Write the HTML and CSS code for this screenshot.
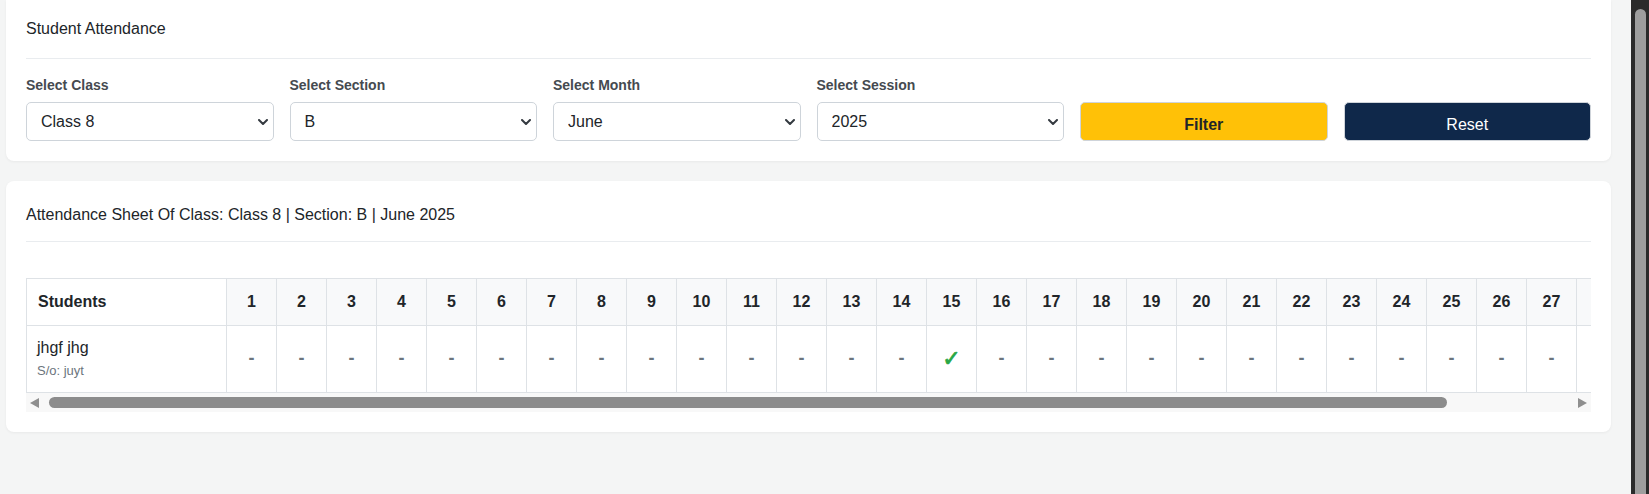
FILE: index.html
```html
<!DOCTYPE html>
<html lang="en">
<head>
<meta charset="utf-8">
<title>Student Attendance</title>
<link rel="stylesheet" href="styles.css">
</head>
<body>
<div class="page">
  <main class="main">
    <section class="card card-filter">
      <h1 class="card-title">Student Attendance</h1>
      <hr class="divider">
      <form class="filters">
        <div class="field">
          <label class="label">Select Class</label>
          <div class="select-wrap">
            <select class="select"><option>Class 8</option></select>
            <svg class="chev" viewBox="0 0 10 6" width="10" height="6"><path d="M1 1l4 4 4-4" fill="none" stroke="#343a40" stroke-width="2" stroke-linecap="round" stroke-linejoin="round"/></svg>
          </div>
        </div>
        <div class="field">
          <label class="label">Select Section</label>
          <div class="select-wrap">
            <select class="select"><option>B</option></select>
            <svg class="chev" viewBox="0 0 10 6" width="10" height="6"><path d="M1 1l4 4 4-4" fill="none" stroke="#343a40" stroke-width="2" stroke-linecap="round" stroke-linejoin="round"/></svg>
          </div>
        </div>
        <div class="field">
          <label class="label">Select Month</label>
          <div class="select-wrap">
            <select class="select"><option>June</option></select>
            <svg class="chev" viewBox="0 0 10 6" width="10" height="6"><path d="M1 1l4 4 4-4" fill="none" stroke="#343a40" stroke-width="2" stroke-linecap="round" stroke-linejoin="round"/></svg>
          </div>
        </div>
        <div class="field">
          <label class="label">Select Session</label>
          <div class="select-wrap">
            <select class="select"><option>2025</option></select>
            <svg class="chev" viewBox="0 0 10 6" width="10" height="6"><path d="M1 1l4 4 4-4" fill="none" stroke="#343a40" stroke-width="2" stroke-linecap="round" stroke-linejoin="round"/></svg>
          </div>
        </div>
        <div class="field">
          <button type="button" class="btn btn-filter">Filter</button>
        </div>
        <div class="field">
          <button type="button" class="btn btn-reset">Reset</button>
        </div>
      </form>
    </section>

    <section class="card card-sheet">
      <h2 class="card-title">Attendance Sheet Of Class: Class 8 | Section: B | June 2025</h2>
      <hr class="divider">
      <div class="table-scroll">
        <div class="table-clip">
          <table class="sheet">
            <colgroup>
              <col class="col-student">
              <col class="col-day"><col class="col-day"><col class="col-day"><col class="col-day"><col class="col-day">
              <col class="col-day"><col class="col-day"><col class="col-day"><col class="col-day"><col class="col-day">
              <col class="col-day"><col class="col-day"><col class="col-day"><col class="col-day"><col class="col-day">
              <col class="col-day"><col class="col-day"><col class="col-day"><col class="col-day"><col class="col-day">
              <col class="col-day"><col class="col-day"><col class="col-day"><col class="col-day"><col class="col-day">
              <col class="col-day"><col class="col-day"><col class="col-day"><col class="col-day"><col class="col-day">
            </colgroup>
            <thead>
              <tr>
                <th class="th-student">Students</th>
                <th>1</th><th>2</th><th>3</th><th>4</th><th>5</th><th>6</th><th>7</th><th>8</th><th>9</th><th>10</th>
                <th>11</th><th>12</th><th>13</th><th>14</th><th>15</th><th>16</th><th>17</th><th>18</th><th>19</th><th>20</th>
                <th>21</th><th>22</th><th>23</th><th>24</th><th>25</th><th>26</th><th>27</th><th>28</th><th>29</th><th>30</th>
              </tr>
            </thead>
            <tbody>
              <tr>
                <td class="td-student">
                  <div class="stu-name">jhgf jhg</div>
                  <div class="stu-parent">S/o: juyt</div>
                </td>
                <td class="na">-</td><td class="na">-</td><td class="na">-</td><td class="na">-</td><td class="na">-</td>
                <td class="na">-</td><td class="na">-</td><td class="na">-</td><td class="na">-</td><td class="na">-</td>
                <td class="na">-</td><td class="na">-</td><td class="na">-</td><td class="na">-</td><td class="present">✓</td>
                <td class="na">-</td><td class="na">-</td><td class="na">-</td><td class="na">-</td><td class="na">-</td>
                <td class="na">-</td><td class="na">-</td><td class="na">-</td><td class="na">-</td><td class="na">-</td>
                <td class="na">-</td><td class="na">-</td><td class="na">-</td><td class="na">-</td><td class="na">-</td>
              </tr>
            </tbody>
          </table>
        </div>
        <div class="hbar">
          <span class="hbar-btn"><span class="tri tri-left"></span></span>
          <span class="hbar-track"><span class="hbar-thumb"></span></span>
          <span class="hbar-btn"><span class="tri tri-right"></span></span>
        </div>
      </div>
    </section>
  </main>
  <div class="vbar"><div class="vbar-thumb"></div></div>
</div>
</body>
</html>
```

FILE: styles.css
```css
* { box-sizing: border-box; }

html, body {
  margin: 0;
  padding: 0;
  height: 100%;
}

body {
  font-family: "Liberation Sans", Arial, sans-serif;
  font-size: 16px;
  color: #212529;
  background: #f4f5f5;
  overflow: hidden;
}

.page {
  display: flex;
  height: 100vh;
}

.main {
  flex: 1;
  min-width: 0;
  padding: 0 20px 0 6px;
  display: flex;
  flex-direction: column;
  gap: 20px;
}

.card {
  background: #fff;
  border-radius: 0 0 8px 8px;
  box-shadow: 0 1px 3px rgba(0, 0, 0, 0.05);
  padding: 17px 20px 20px;
}

.card-sheet {
  border-radius: 8px;
  padding-top: 22px;
  padding-bottom: 20px;
}

.card-title {
  margin: 0;
  font-size: 16px;
  font-weight: normal;
  line-height: 24px;
  color: #212529;
}

.divider {
  margin: 17px 0 0;
  border: 0;
  border-top: 1px solid #e9ecef;
}

.card-sheet .divider {
  margin-top: 14px;
}

.filters {
  margin-top: 16px;
  display: grid;
  grid-template-columns: repeat(6, 1fr);
  gap: 16px;
  align-items: end;
}

.field {
  display: flex;
  flex-direction: column;
}

.label {
  font-size: 14px;
  font-weight: bold;
  line-height: 21px;
  color: #454a50;
  margin-bottom: 6px;
}

.select-wrap {
  position: relative;
}

.select {
  -webkit-appearance: none;
  appearance: none;
  display: block;
  width: 100%;
  height: 39px;
  padding: 0 30px 0 14px;
  border: 1px solid #ced4da;
  border-radius: 5px;
  background: #fff;
  font-family: "Liberation Sans", Arial, sans-serif;
  font-size: 16px;
  color: #212529;
}

.chev {
  position: absolute;
  right: 6px;
  top: 17px;
  width: 10px;
  height: 6px;
}

.btn {
  height: 39px;
  width: 100%;
  border: 1px solid #cfd4da;
  border-radius: 5px;
  font-family: "Liberation Sans", Arial, sans-serif;
  font-size: 16px;
  padding: 6px 0 0;
}

.btn-filter {
  background: #ffc107;
  color: #212529;
  font-weight: bold;
}

.btn-reset {
  background: #0f284a;
  color: #fff;
}

.table-scroll {
  margin-top: 36px;
}

.table-clip {
  overflow: hidden;
}

.sheet {
  border-collapse: collapse;
  table-layout: fixed;
  width: 1700px;
}

.col-student { width: 200px; }
.col-day { width: 50px; }

.sheet th,
.sheet td {
  border: 1px solid #dee2e6;
}

.sheet th {
  padding: 11px 0;
  line-height: 24px;
  font-size: 16px;
  font-weight: bold;
  text-align: center;
  background: #f8f9fa;
  color: #212529;
}

.sheet th.th-student {
  text-align: left;
  padding-left: 11px;
  background: #fff;
}

.sheet td {
  padding: 10px 0 11px;
  text-align: center;
  vertical-align: middle;
}

.sheet td.td-student {
  text-align: left;
  padding-left: 10px;
}

.stu-name {
  font-size: 16px;
  line-height: 24px;
  color: #212529;
}

.stu-parent {
  font-size: 13px;
  line-height: 21px;
  color: #6c757d;
}

.na {
  font-weight: bold;
  color: #6c757d;
  font-size: 18px;
}

.present {
  color: #28a745;
  font-size: 22px;
  font-weight: bold;
  line-height: 24px;
  font-family: "DejaVu Sans", sans-serif;
  -webkit-text-stroke: 0.8px #28a745;
}

.hbar {
  display: flex;
  height: 19px;
  background: #f8f8f8;
}

.hbar-btn {
  width: 17px;
  display: flex;
  align-items: center;
  justify-content: center;
}

.tri {
  width: 0;
  height: 0;
  border-top: 5.5px solid transparent;
  border-bottom: 5.5px solid transparent;
}

.tri-left {
  border-right: 9px solid #8f8f8f;
}

.tri-right {
  border-left: 9px solid #8f8f8f;
}

.hbar-track {
  flex: 1;
  display: flex;
  align-items: center;
  padding-left: 6px;
}

.hbar-thumb {
  display: block;
  width: 1398px;
  height: 11px;
  border-radius: 6px;
  background: #8c8c8c;
}

.vbar {
  width: 18px;
  flex: none;
  background: #2b2b2b;
  padding: 9px 3px 0 4px;
}

.vbar-thumb {
  height: 100%;
  background: #9e9e9e;
  border-radius: 6px 6px 0 0;
}
```
